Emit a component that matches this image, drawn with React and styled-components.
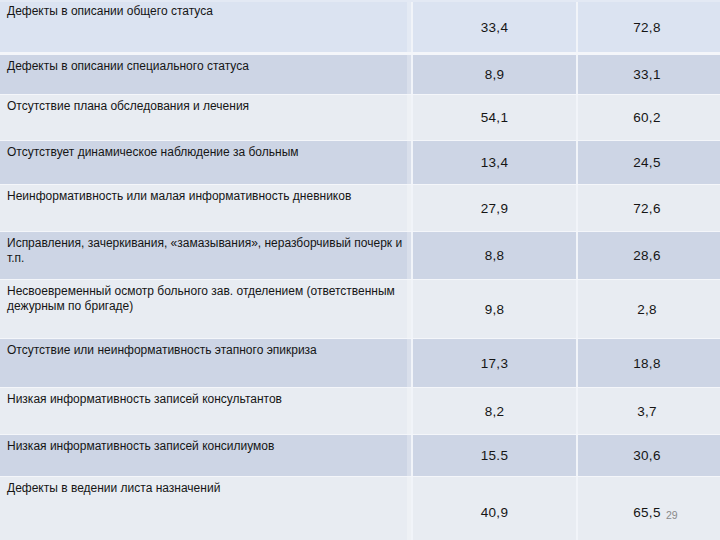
import React from 'react'
import styled, { createGlobalStyle } from 'styled-components'

const GlobalStyle = createGlobalStyle`
  html, body {
    margin: 0;
    padding: 0;
    background: #ffffff;
  }
  body {
    font-family: "Liberation Sans", Arial, sans-serif;
  }
`

const Page = styled.div`
  position: relative;
  width: 720px;
  height: 540px;
  overflow: hidden;
  background: #ffffff;
`

const Table = styled.div`
  display: flex;
  flex-direction: column;
  width: 720px;
`

const Row = styled.div`
  display: grid;
  grid-template-columns: 413px 165px 1fr;
  height: ${p => p.h}px;
  background: ${p => p.bg};
  border-top: ${p => (p.first ? '2px solid #e3e9f4' : 'none')};
  border-bottom: ${p => p.gap}px solid #f4f6fa;
  box-sizing: border-box;
`

const Label = styled.div`
  padding: ${p => (p.first ? 2 : 4)}px 4px 0 7px;
  font-size: 12px;
  line-height: 15px;
  color: #151515;
  border-right: 2px solid #f1f4f9;
  box-shadow: inset -4px 0 0 rgba(255, 255, 255, 0.25);
`

const Value = styled.div`
  display: flex;
  align-items: center;
  justify-content: center;
  padding-top: ${p => p.offset || 0}px;
  padding-right: ${p => (p.last ? 4 : 0)}px;
  font-size: 13.5px;
  letter-spacing: 0.3px;
  color: #151515;
  border-right: ${p => (p.last ? 'none' : '2px solid #f1f4f9')};
`

const PageNum = styled.div`
  position: absolute;
  left: 666px;
  top: 509px;
  font-size: 10.5px;
  color: #8a8a8a;
`

const LIGHT = '#e8ecf2'
const DARK = '#cdd5e5'

const rows = [
  { label: 'Дефекты в описании общего статуса', a: '33,4', b: '72,8', h: 55, bg: '#dbe3f1', gap: 3, first: true },
  { label: 'Дефекты в описании специального статуса', a: '8,9', b: '33,1', h: 40, bg: DARK, gap: 1 },
  { label: 'Отсутствие плана обследования и лечения', a: '54,1', b: '60,2', h: 46, bg: LIGHT, gap: 1 },
  { label: 'Отсутствует динамическое наблюдение за больным', a: '13,4', b: '24,5', h: 44, bg: DARK, gap: 1 },
  { label: 'Неинформативность или малая информативность дневников', a: '27,9', b: '72,6', h: 47, bg: LIGHT, gap: 1 },
  { label: 'Исправления, зачеркивания, «замазывания», неразборчивый почерк и т.п.', a: '8,8', b: '28,6', h: 48, bg: DARK, gap: 1 },
  { label: 'Несвоевременный осмотр больного зав. отделением (ответственным дежурным по бригаде)', a: '9,8', b: '2,8', h: 59, bg: LIGHT, gap: 1 },
  { label: 'Отсутствие или неинформативность этапного эпикриза', a: '17,3', b: '18,8', h: 49, bg: DARK, gap: 1 },
  { label: 'Низкая информативность записей консультантов', a: '8,2', b: '3,7', h: 47, bg: LIGHT, gap: 1 },
  { label: 'Низкая информативность записей консилиумов', a: '15.5', b: '30,6', h: 42, bg: DARK, gap: 1 },
  { label: 'Дефекты в ведении листа назначений', a: '40,9', b: '65,5', h: 70, bg: LIGHT, gap: 0, offset: -12 },
]

export default function App() {
  return (
    <Page>
      <GlobalStyle />
      <Table>
        {rows.map((r, i) => (
          <Row key={i} h={r.h} bg={r.bg} gap={r.gap} first={r.first}>
            <Label first={r.first}>{r.label}</Label>
            <Value offset={r.offset}>{r.a}</Value>
            <Value offset={r.offset} last>{r.b}</Value>
          </Row>
        ))}
      </Table>
      <PageNum>29</PageNum>
    </Page>
  )
}
